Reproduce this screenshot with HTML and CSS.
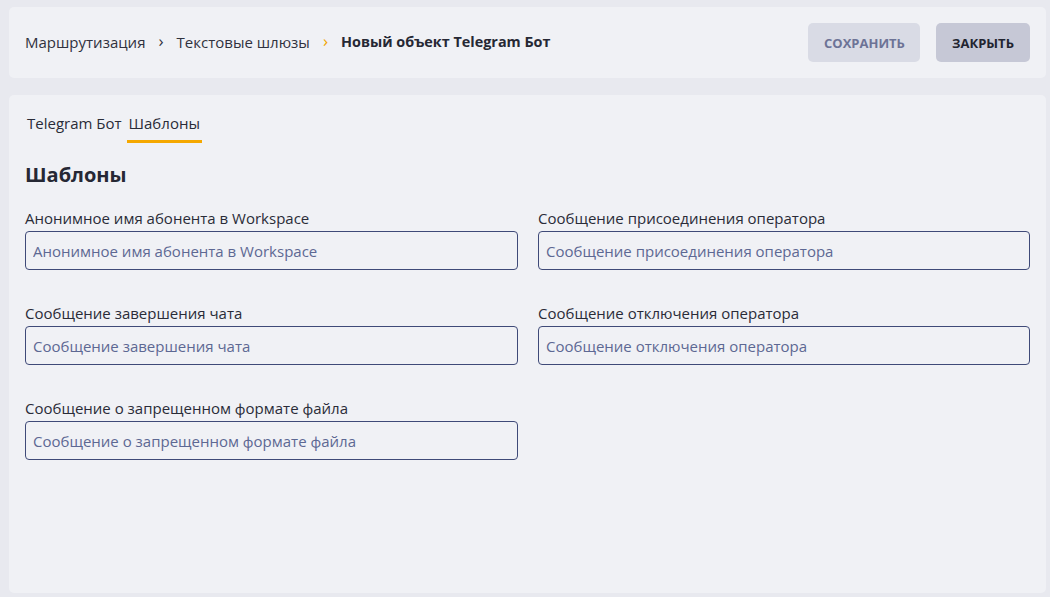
FILE: index.html
```html
<!DOCTYPE html>
<html lang="ru">
<head>
<meta charset="utf-8">
<link rel="stylesheet" href="styles.css">
</head>
<body>
<div class="page">
  <header class="topbar">
    <nav class="crumbs">
      <span class="crumb">Маршрутизация</span>
      <span class="sep">&#8250;</span>
      <span class="crumb">Текстовые шлюзы</span>
      <span class="sep sep-active">&#8250;</span>
      <span class="crumb crumb-current">Новый объект Telegram Бот</span>
    </nav>
    <div class="actions">
      <button class="btn btn-save">СОХРАНИТЬ</button>
      <button class="btn btn-close">ЗАКРЫТЬ</button>
    </div>
  </header>
  <main class="card">
    <div class="tabs">
      <div class="tab">Telegram Бот</div>
      <div class="tab tab-active">Шаблоны</div>
    </div>
    <h2 class="title">Шаблоны</h2>
    <div class="grid">
      <div class="field">
        <label class="label">Анонимное имя абонента в Workspace</label>
        <input class="input" placeholder="Анонимное имя абонента в Workspace">
      </div>
      <div class="field">
        <label class="label">Сообщение присоединения оператора</label>
        <input class="input" placeholder="Сообщение присоединения оператора">
      </div>
      <div class="field">
        <label class="label">Сообщение завершения чата</label>
        <input class="input" placeholder="Сообщение завершения чата">
      </div>
      <div class="field">
        <label class="label">Сообщение отключения оператора</label>
        <input class="input" placeholder="Сообщение отключения оператора">
      </div>
      <div class="field">
        <label class="label">Сообщение о запрещенном формате файла</label>
        <input class="input" placeholder="Сообщение о запрещенном формате файла">
      </div>
    </div>
  </main>
</div>
</body>
</html>
```

FILE: styles.css
```css
* { box-sizing: border-box; }
html, body { margin: 0; padding: 0; }
body {
  background: #e8e9ef;
  font-family: "Open Sans", "Noto Sans", sans-serif;
  color: #2a2c38;
  width: 1050px;
  height: 597px;
  overflow: hidden;
}
.page {
  padding: 7px 4px 0 9px;
  display: flex;
  flex-direction: column;
  gap: 17px;
}
.topbar {
  height: 71px;
  background: #f0f1f5;
  border-radius: 5px;
  display: flex;
  align-items: center;
  justify-content: space-between;
  padding: 0 16px;
}
.crumbs {
  display: flex;
  align-items: center;
  font-size: 15px;
  color: #30323e;
  position: relative;
  top: -1px;
}
.sep {
  margin: 0 13px;
  font-size: 17px;
  color: #30323e;
  position: relative;
  top: -1px;
}
.sep-active { color: #f0a500; }
.crumb-current { font-weight: 700; color: #262834; font-size: 14.4px; }
.actions { display: flex; gap: 16px; }
.btn {
  height: 39px;
  border: none;
  border-radius: 5px;
  font-family: inherit;
  font-size: 13px;
  font-weight: 700;
  padding: 0 16px;
}
.btn-save { background: #d9dbe5; color: #6d7396; width: 112px; }
.btn-close { background: #c6c8d6; color: #222430; width: 94px; }
.card {
  height: 498px;
  background: #f0f1f5;
  border-radius: 5px;
  padding: 14px 16px 0 16px;
}
.tabs {
  display: flex;
  gap: 3px;
}
.tab {
  font-size: 15px;
  color: #2a2c38;
  padding: 4px 2px 7px;
  border-bottom: 3px solid transparent;
}
.tab-active { border-bottom-color: #f5a800; }
.title {
  margin: 19px 0 0;
  font-size: 20px;
  font-weight: 700;
  color: #262834;
  line-height: 26px;
}
.grid {
  margin-top: 21px;
  display: grid;
  grid-template-columns: 493px 492px;
  column-gap: 20px;
  row-gap: 34px;
}
.field { display: flex; flex-direction: column; gap: 4px; }
.label {
  font-size: 15px;
  line-height: 18px;
  color: #2a2c38;
}
.input {
  height: 39px;
  border: 1px solid #3f4a78;
  border-radius: 4px;
  background: #f0f1f5;
  font-family: inherit;
  font-size: 15px;
  padding: 0 7px;
  color: #2a2c38;
  outline: none;
}
.input::placeholder { color: #5d6893; opacity: 1; }
```
